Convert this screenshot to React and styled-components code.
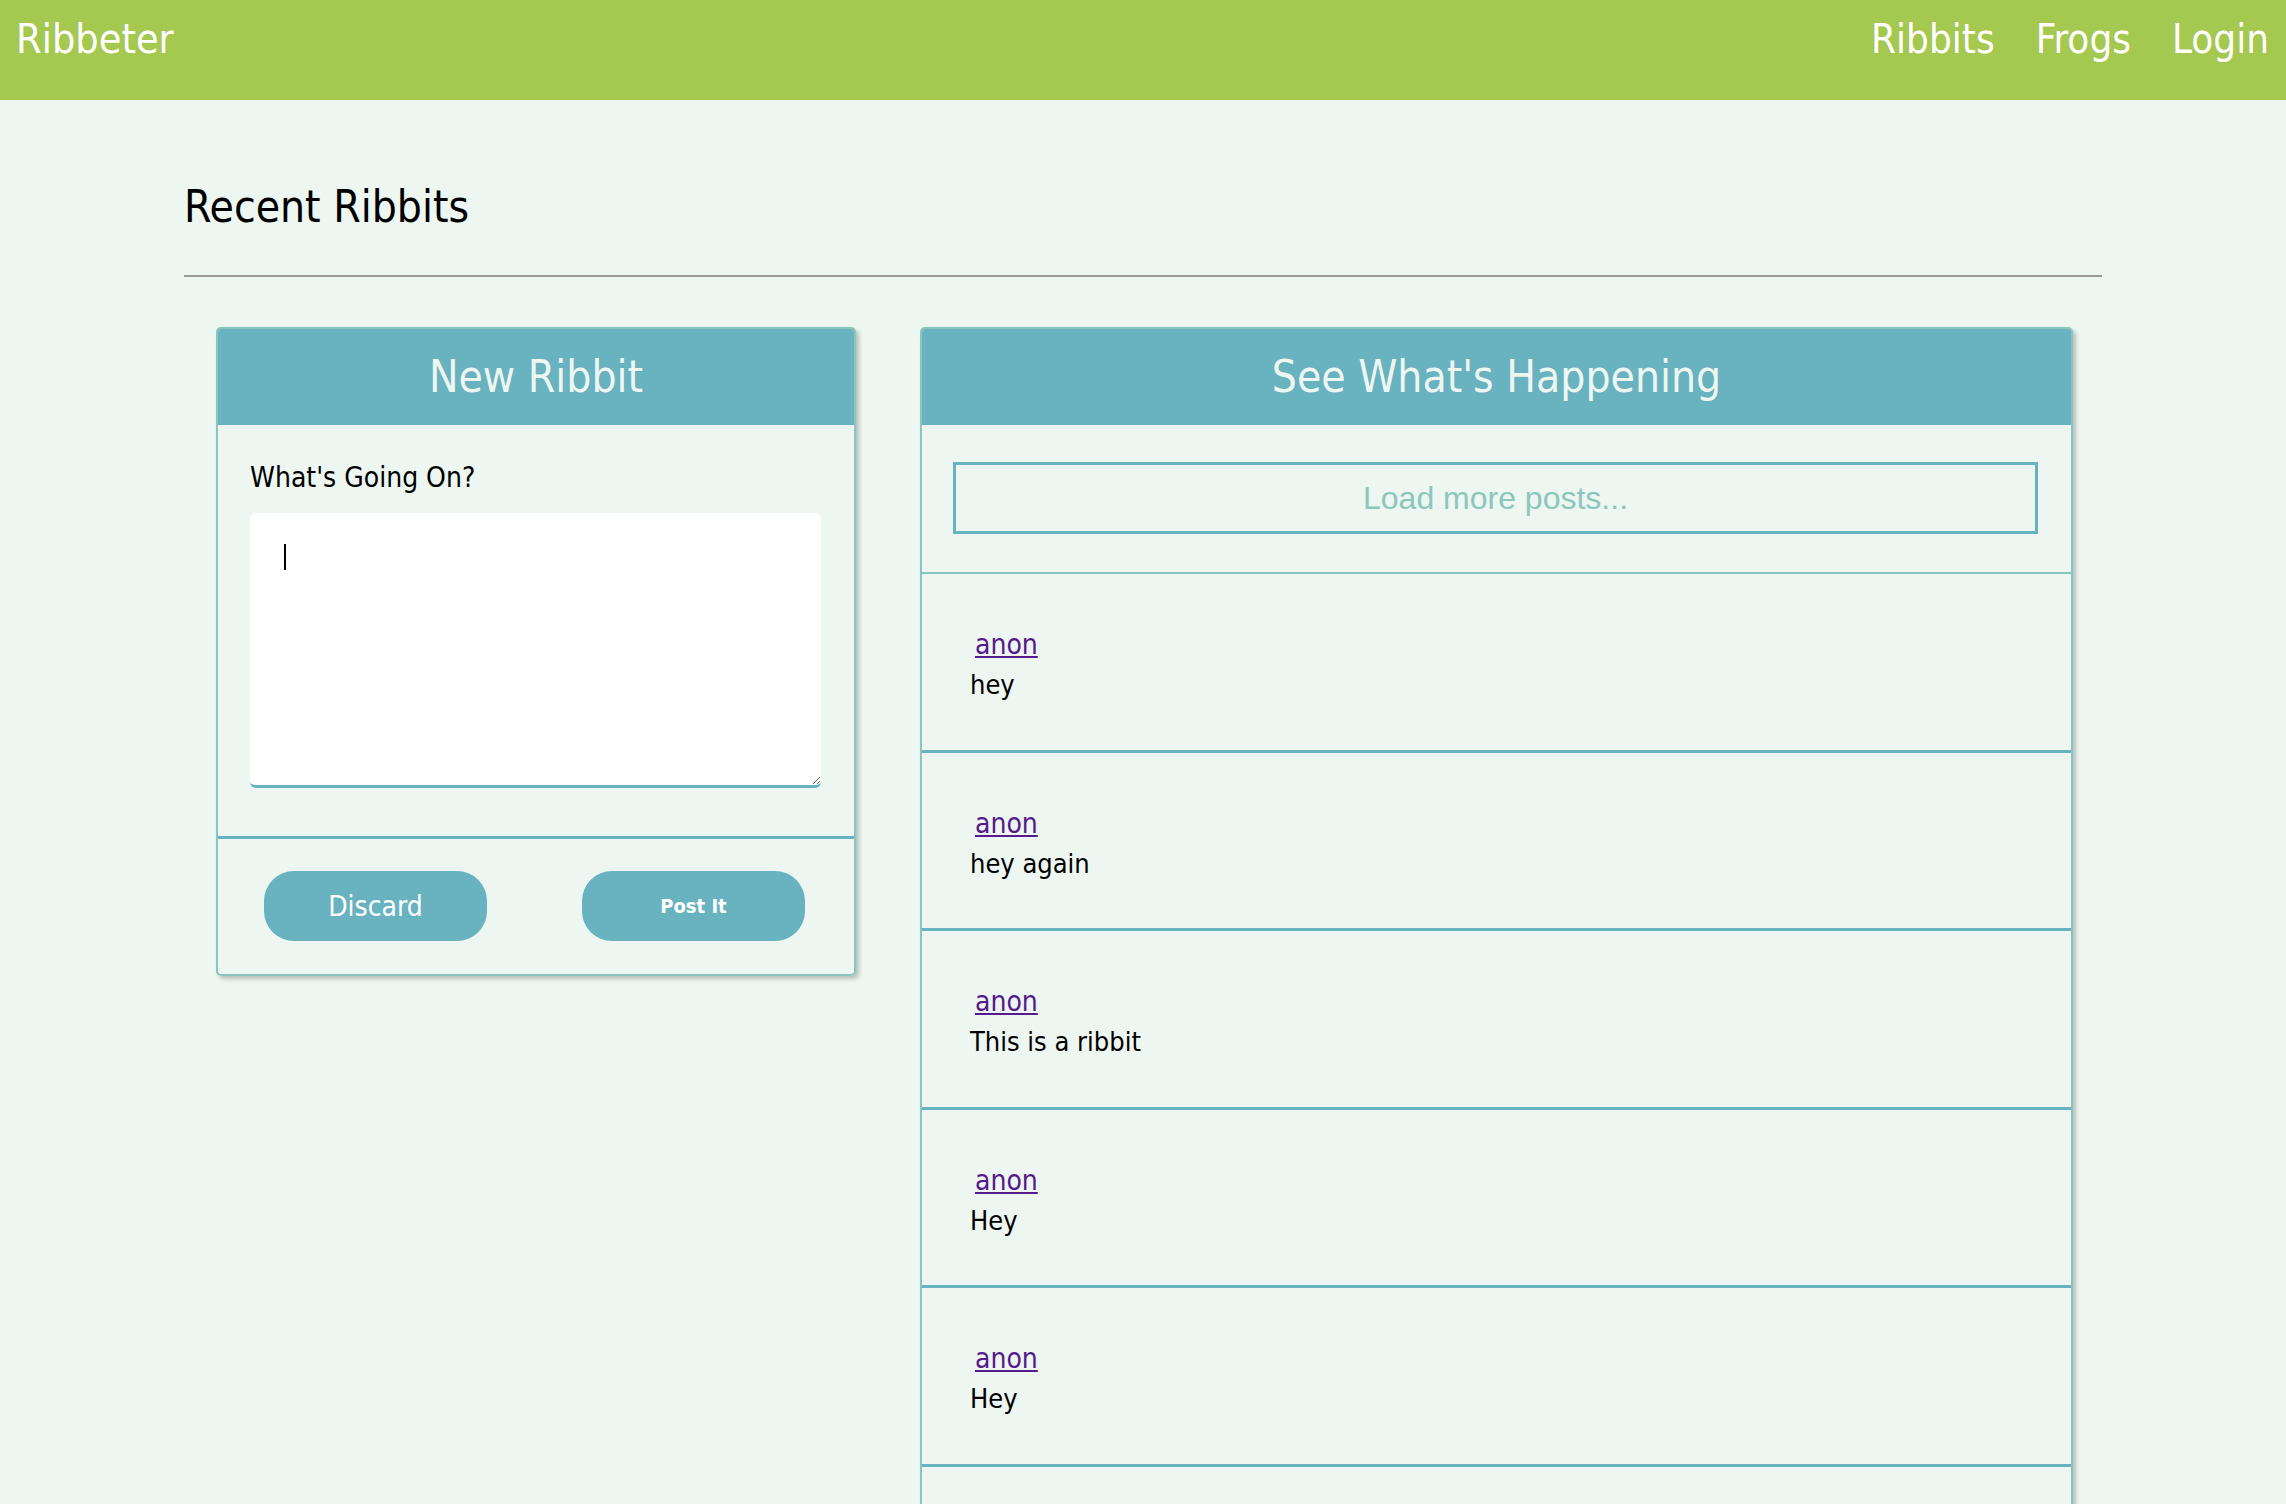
import React from 'react';
import styled, { createGlobalStyle } from 'styled-components';

const GREEN = '#a4c850';
const TEAL = '#69b2bf';
const PALE_TEAL = '#88c5bc';
const PAGE_BG = '#edf6f1';
const HEADING_FONT = '"DejaVu Sans Condensed", "DejaVu Sans", sans-serif';

const GlobalStyle = createGlobalStyle`
  body {
    margin: 0;
    background: ${PAGE_BG};
    font-family: ${HEADING_FONT};
  }
`;

const posts = [
  { id: 1, author: 'anon', text: 'hey' },
  { id: 2, author: 'anon', text: 'hey again' },
  { id: 3, author: 'anon', text: 'This is a ribbit' },
  { id: 4, author: 'anon', text: 'Hey' },
  { id: 5, author: 'anon', text: 'Hey' },
  { id: 6, author: 'anon', text: 'hello' },
];

function App() {
  return (
    <>
      <GlobalStyle />
      <NavBar>
        <Brand href="#">Ribbeter</Brand>
        <NavLinks>
          <NavLink href="#">Ribbits</NavLink>
          <NavLink href="#">Frogs</NavLink>
          <NavLink href="#">Login</NavLink>
        </NavLinks>
      </NavBar>
      <Main>
        <Title>Recent Ribbits</Title>
        <Rule />
        <Columns>
          <Card width="640px">
            <CardHeader>New Ribbit</CardHeader>
            <ComposeBody>
              <FieldLabel htmlFor="ribbit">What's Going On?</FieldLabel>
              <InputWrap>
                <RibbitInput id="ribbit" autoFocus />
                <Caret />
              </InputWrap>
            </ComposeBody>
            <ComposeFooter>
              <PillButton>Discard</PillButton>
              <PillButton small>Post It</PillButton>
            </ComposeFooter>
          </Card>
          <Card width="1153px">
            <CardHeader>See What's Happening</CardHeader>
            <LoadMoreRow>
              <LoadMoreButton>Load more posts...</LoadMoreButton>
            </LoadMoreRow>
            {posts.map(post => (
              <Post key={post.id}>
                <Author href="#">{post.author}</Author>
                <PostText>{post.text}</PostText>
              </Post>
            ))}
          </Card>
        </Columns>
      </Main>
    </>
  );
}

const NavBar = styled.nav`
  display: flex;
  justify-content: space-between;
  align-items: flex-start;
  height: 100px;
  padding: 0 17px 0 16px;
  background: ${GREEN};
`;

const Brand = styled.a`
  font-size: 41px;
  line-height: 78px;
  color: #ffffff;
  text-decoration: none;
`;

const NavLinks = styled.div`
  display: flex;
  gap: 41px;
`;

const NavLink = styled.a`
  font-size: 40px;
  line-height: 78px;
  color: #ffffff;
  text-decoration: none;
`;

const Main = styled.main`
  padding: 82px 184px 0;
`;

const Title = styled.h1`
  margin: 0;
  font-size: 44px;
  line-height: 50px;
  font-weight: normal;
  color: #000000;
`;

const Rule = styled.hr`
  margin: 43px 0 0;
  border: none;
  border-top: 2px solid #9a9a9a;
`;

const Columns = styled.div`
  display: flex;
  align-items: flex-start;
  gap: 64px;
  padding: 50px 0 0 32px;
`;

const Card = styled.section`
  box-sizing: border-box;
  width: ${({ width }) => width};
  border: 2px solid ${PALE_TEAL};
  border-radius: 5px;
  overflow: hidden;
  box-shadow: 3px 3px 4px rgba(0, 0, 0, 0.22);
`;

const CardHeader = styled.h2`
  margin: 0;
  height: 96px;
  line-height: 96px;
  text-align: center;
  font-size: 44px;
  font-weight: normal;
  color: ${PAGE_BG};
  background: ${TEAL};
`;

const ComposeBody = styled.div`
  display: flex;
  flex-direction: column;
  padding: 35px 33px 48px 32px;
`;

const FieldLabel = styled.label`
  font-size: 28px;
  line-height: 35px;
  color: #000000;
`;

const InputWrap = styled.div`
  position: relative;
  margin-top: 18px;
`;

const RibbitInput = styled.textarea`
  display: block;
  box-sizing: border-box;
  width: 100%;
  height: 275px;
  padding: 31px 34px;
  border: none;
  border-bottom: 3px solid ${TEAL};
  border-radius: 6px;
  background: #ffffff;
  font-family: ${HEADING_FONT};
  font-size: 23px;
  outline: none;
  caret-color: transparent;
  resize: vertical;
`;

const Caret = styled.span`
  position: absolute;
  top: 31px;
  left: 34px;
  width: 2px;
  height: 26px;
  background: #000000;
  pointer-events: none;
`;

const ComposeFooter = styled.div`
  display: flex;
  justify-content: space-between;
  padding: 32px 49px 33px 46px;
  border-top: 3px solid ${TEAL};
`;

const PillButton = styled.button`
  width: 223px;
  height: 70px;
  border: none;
  border-radius: 30px;
  background: ${TEAL};
  color: #ffffff;
  font-family: ${HEADING_FONT};
  font-size: ${({ small }) => (small ? '20px' : '28px')};
  font-weight: ${({ small }) => (small ? 'bold' : 'normal')};
  cursor: pointer;
`;

const LoadMoreRow = styled.div`
  padding: 37px 33px 38px 31px;
  border-bottom: 2px solid ${PALE_TEAL};
`;

const LoadMoreButton = styled.button`
  display: block;
  box-sizing: border-box;
  width: 100%;
  height: 72px;
  border: 3px solid ${TEAL};
  background: transparent;
  color: #8cc7bb;
  font-family: 'Liberation Sans', Arial, sans-serif;
  font-size: 32px;
  cursor: pointer;
`;

const Post = styled.article`
  display: flex;
  flex-direction: column;
  align-items: flex-start;
  padding: 51px 48px 44.5px;
  border-bottom: 3px solid ${TEAL};
`;

const Author = styled.a`
  margin-left: 5px;
  font-size: 28px;
  line-height: 40px;
  color: #551a8b;
`;

const PostText = styled.p`
  margin: 0;
  font-size: 27px;
  line-height: 40px;
  color: #000000;
`;

export default App;
